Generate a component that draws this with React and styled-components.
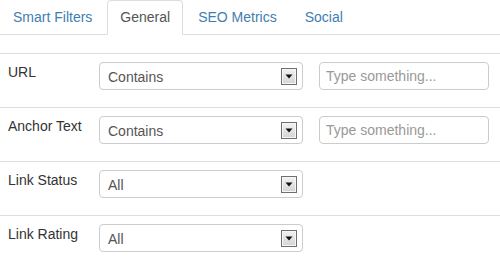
import React from "react";
import styled, { createGlobalStyle } from "styled-components";

const Global = createGlobalStyle`
  html, body { margin: 0; padding: 0; background: #fff; }
  body { font-family: "Liberation Sans", Arial, Helvetica, sans-serif; font-size: 14px; color: #333; }
  * { box-sizing: border-box; }
`;

const Page = styled.div`
  width: 500px;
`;

const Tabs = styled.ul`
  display: flex;
  list-style: none;
  margin: 0;
  padding: 0;
  height: 35px;
  border-bottom: 1px solid #ddd;
`;

const Tab = styled.li`
  margin-right: 2px;
  margin-bottom: -1px;
  padding: 6px 12px 7px;
  line-height: 20px;
  border: 1px solid ${(p) => (p.$active ? "#ddd" : "transparent")};
  border-bottom-color: ${(p) => (p.$active ? "#fff" : "transparent")};
  border-radius: 4px 4px 0 0;
  background: ${(p) => (p.$active ? "#fff" : "transparent")};
  color: ${(p) => (p.$active ? "#555" : "#3f7eb1")};
  white-space: nowrap;
`;

const Table = styled.div`
  margin-top: 18px;
`;

const Row = styled.div`
  display: grid;
  grid-template-columns: 75px 204px 170px;
  column-gap: 16px;
  align-items: start;
  padding: 8px 8px 17px;
  border-top: 1px solid #ddd;
`;

const Label = styled.div`
  line-height: 20px;
  color: #333;
  white-space: nowrap;
`;

const SelectBox = styled.div`
  display: flex;
  align-items: center;
  justify-content: space-between;
  height: 28px;
  padding: 2px 5px 0 8px;
  border: 1px solid #ccc;
  border-radius: 4px;
  background: #fff;
  color: #555;
`;

const ArrowButton = styled.span`
  display: flex;
  align-items: center;
  justify-content: center;
  width: 16px;
  height: 17px;
  margin-top: -2px;
  border: 1px solid #6f6f6f;
  box-shadow: inset 0 0 0 1px #f6f6f6;
  background: linear-gradient(#f2f2f2, #d4d4d4);
`;

const TextInput = styled.div`
  height: 28px;
  padding: 0 6px;
  border: 1px solid #ccc;
  border-radius: 4px;
  color: #999;
  line-height: 26px;
  white-space: nowrap;
`;

const Arrow = () => (
  <ArrowButton>
    <svg width="8" height="5" viewBox="0 0 8 5">
      <path d="M0.5 0.5 H7.5 L4 4.5 Z" fill="#111" />
    </svg>
  </ArrowButton>
);

const rows = [
  { label: "URL", value: "Contains", input: true },
  { label: "Anchor Text", value: "Contains", input: true },
  { label: "Link Status", value: "All", input: false },
  { label: "Link Rating", value: "All", input: false },
];

export default function App() {
  return (
    <Page>
      <Global />
      <Tabs>
        <Tab>Smart Filters</Tab>
        <Tab $active>General</Tab>
        <Tab>SEO Metrics</Tab>
        <Tab>Social</Tab>
      </Tabs>
      <Table>
        {rows.map((r) => (
          <Row key={r.label}>
            <Label>{r.label}</Label>
            <SelectBox>
              <span>{r.value}</span>
              <Arrow />
            </SelectBox>
            {r.input && <TextInput>Type something...</TextInput>}
          </Row>
        ))}
      </Table>
    </Page>
  );
}
